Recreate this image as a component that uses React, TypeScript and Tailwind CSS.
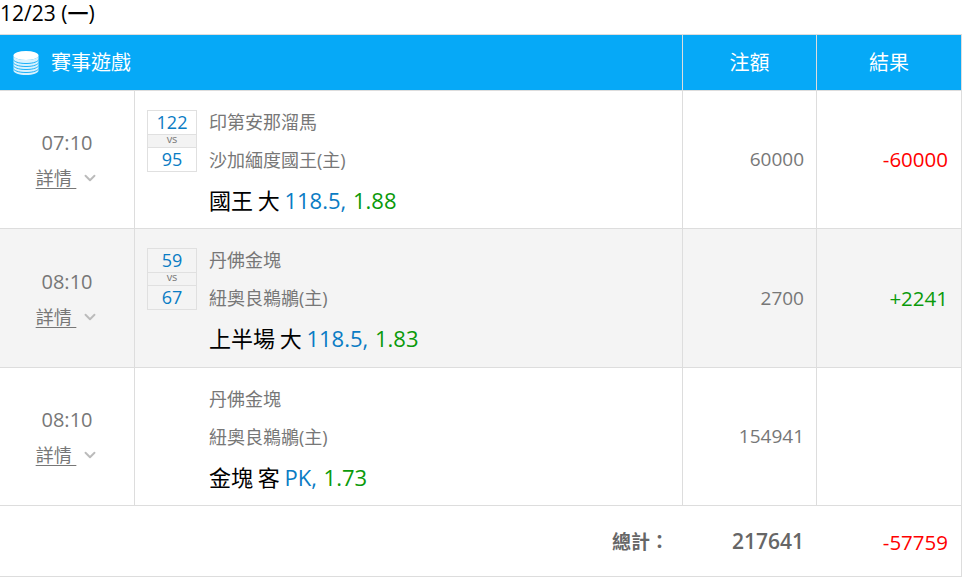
import React from 'react';
import { ChevronDown } from 'lucide-react';

interface GameRow {
  time: string;
  home: string;
  away: string;
  scoreA?: string;
  scoreB?: string;
  pickName: string;
  pickLine: string;
  pickOdds: string;
  amount: string;
  result?: string;
  win?: boolean;
  shaded?: boolean;
}

const rows: GameRow[] = [
  { time: '07:10', home: '印第安那溜馬', away: '沙加緬度國王(主)', scoreA: '122', scoreB: '95', pickName: '國王 大', pickLine: '118.5,', pickOdds: '1.88', amount: '60000', result: '-60000' },
  { time: '08:10', home: '丹佛金塊', away: '紐奧良鵜鶘(主)', scoreA: '59', scoreB: '67', pickName: '上半場 大', pickLine: '118.5,', pickOdds: '1.83', amount: '2700', result: '+2241', win: true, shaded: true },
  { time: '08:10', home: '丹佛金塊', away: '紐奧良鵜鶘(主)', pickName: '金塊 客', pickLine: 'PK,', pickOdds: '1.73', amount: '154941' },
];

const font = "font-['Open_Sans','Noto_Sans_CJK_TC',sans-serif]";

const CoinIcon = () => (
  <svg width="26" height="26" viewBox="0 0 26 26" fill="none">
    <ellipse cx="13" cy="5.5" rx="12.5" ry="4.5" fill="#ffffff" />
    <path d="M.5 5.5V20.500C.5 23 6 25 13 25s12.500-2 12.500-4.500V5.500C25.500 8 20 10 13 10S.5 8 .5 5.500Z" fill="#ffffff" fillOpacity="0.85" />
    <path d="M.5 10c2 2.500 7 3.500 12.500 3.500S23.500 12.500 25.500 10M.5 13c2 2.500 7 3.500 12.500 3.500S23.500 15.500 25.500 13M.5 16c2 2.500 7 3.500 12.500 3.500S23.500 18.500 25.500 16M.5 19c2 2.500 7 3.500 12.500 3.500S23.500 21.500 25.500 19" stroke="#06a9f7" strokeWidth="0.9" />
  </svg>
);

const ScoreBox = ({ a, b }: { a: string; b: string }) => (
  <div className="w-[50px] h-[62px] border border-[#e0e0e0] flex flex-col text-center text-[#0a7cc4]">
    <div className="h-[23px] text-[18px] leading-[23px]">{a}</div>
    <div className="h-[14px] bg-[#f3f3f3] border-y border-[#e0e0e0] text-[11px] leading-[8px] text-[#777777]">vs</div>
    <div className="flex-1 text-[18px] leading-[23px]">{b}</div>
  </div>
);

const Row = ({ row }: { row: GameRow }) => (
  <div className={`flex border-b border-[#dddddd] ${row.shaded ? 'h-[139px] bg-[#f4f4f4]' : 'h-[138px] bg-white'}`}>
    <div className={`w-[135px] shrink-0 border-r border-[#dddddd] flex flex-col items-center text-[#777777] ${row.shaded ? 'pt-[38px]' : 'pt-[37px]'}`}>
      <div className="text-[20px] leading-[30px]">{row.time}</div>
      <div className="flex items-center mt-[8px] text-[18px] leading-[24px] ml-[1px]">
        <span className="underline underline-offset-[3px] decoration-[1px] whitespace-pre">詳情 </span>
        <ChevronDown className="w-[18px] h-[18px] ml-[5px] text-[#bbbbbb]" strokeWidth={2.5} />
      </div>
    </div>
    <div className="w-[548px] shrink-0 border-r border-[#dddddd] flex pt-[19px] pl-[12px]">
      <div className="w-[50px] shrink-0">
        {row.scoreA && row.scoreB && <ScoreBox a={row.scoreA} b={row.scoreB} />}
      </div>
      <div className="ml-[12px] text-[18px] text-[#777777]">
        <div className="leading-[24px]">{row.home}</div>
        <div className="leading-[24px] mt-[14px]">{row.away}</div>
        <div className="mt-[13px] text-[22px] leading-[30px] text-black whitespace-pre [word-spacing:-1px]">
          {row.pickName} <span className="text-[#0a7cc4]">{row.pickLine}</span> <span className="ml-[2px] text-[#0a9a0a]">{row.pickOdds}</span>
        </div>
      </div>
    </div>
    <div className="w-[134px] shrink-0 border-r border-[#dddddd] flex items-center justify-end pr-[12px] text-[19px] text-[#777777]">
      {row.amount}
    </div>
    <div className={`flex-1 flex items-center justify-end pr-[13px] text-[20.500px] ${row.win ? 'text-[#0a9a0a]' : 'text-[#ff0000]'}`}>
      {row.result}
    </div>
  </div>
);

export default function App() {
  return (
    <div className={`w-[964px] h-[580px] bg-white overflow-hidden ${font}`}>
      <div className="h-[34px] text-[21px] leading-[26px] font-medium text-black">12/23 (一)</div>
      <div className="w-[962px] border-t border-r border-[#dddddd]">
        <div className="flex h-[56px] bg-[#06a9f7] text-white text-[20px] border-b border-[#dddddd]">
          <div className="w-[683px] shrink-0 flex items-center pl-[13px] border-r border-[#dddddd]">
            <CoinIcon />
            <span className="ml-[12px]">賽事遊戲</span>
          </div>
          <div className="w-[134px] shrink-0 flex items-center justify-center border-r border-[#dddddd]">注額</div>
          <div className="flex-1 flex items-center justify-center">結果</div>
        </div>
        {rows.map((row, i) => (
          <Row key={i} row={row} />
        ))}
        <div className="flex h-[71px] border-b border-[#dddddd] items-center pt-[2px] text-[#666666] font-semibold text-[21px]">
          <div className="w-[683px] shrink-0 text-right text-[19px] pr-[14px]">總計：</div>
          <div className="w-[134px] shrink-0 text-right pr-[13px]">217641</div>
          <div className="flex-1 text-right pr-[13px] font-normal text-[20.500px] text-[#ff0000]">-57759</div>
        </div>
      </div>
    </div>
  );
}
